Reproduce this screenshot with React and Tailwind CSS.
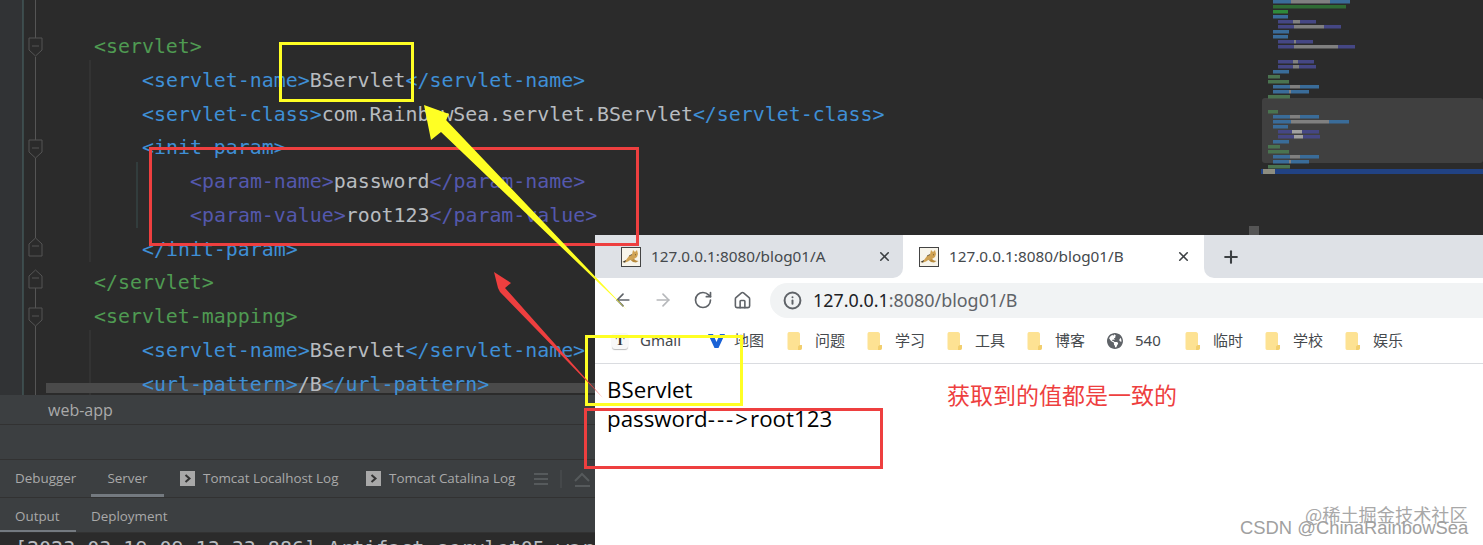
import React from 'react';
import { ArrowLeft, ArrowRight, RotateCw, House, Info, X, Plus } from 'lucide-react';
import { FaGlobeAmericas } from 'react-icons/fa';

const G = '#4f9a52';
const B = '#3f8fd6';
const P = '#5458ad';
const T = '#b8bcc0';

const codeLines = [
    { indent: 0, parts: [['<servlet>', G]] },
    { indent: 1, parts: [['<servlet-name>', B], ['BServlet', T], ['</servlet-name>', B]] },
    { indent: 1, parts: [['<servlet-class>', B], ['com.RainbowSea.servlet.BServlet', T], ['</servlet-class>', B]] },
    { indent: 1, parts: [['<init-param>', B]] },
    { indent: 2, parts: [['<param-name>', P], ['password', T], ['</param-name>', P]] },
    { indent: 2, parts: [['<param-value>', P], ['root123', T], ['</param-value>', P]] },
    { indent: 1, parts: [['</init-param>', B]] },
    { indent: 0, parts: [['</servlet>', G]] },
    { indent: 0, parts: [['<servlet-mapping>', G]] },
    { indent: 1, parts: [['<servlet-name>', B], ['BServlet', T], ['</servlet-name>', B]] },
    { indent: 1, parts: [['<url-pattern>', B], ['/B', T], ['</url-pattern>', B]] },
];

const bl = '#3a6c99';
const gr = '#4a7350';
const pu = '#454784';
const gy = '#808080';

// minimap rows: y, left, then [width, colour] runs
const miniRows = [
    [0, 1273, [18, bl], [39, gy], [20, bl]],
    [5, 1273, [73, '#2f6b34']],
    [10, 1273, [15, '#2f8a3a']],
    [15, 1273, [15, bl]],
    [20, 1278, [15, pu], [7, gy], [16, pu]],
    [25, 1278, [16, pu], [30, gy], [17, pu]],
    [30, 1273, [16, bl]],
    [35, 1273, [15, bl]],
    [40, 1278, [16, pu], [2, gy], [17, pu]],
    [45, 1278, [16, pu], [44, gy], [17, pu]],
    [60, 1278, [15, pu], [5, gy], [16, pu]],
    [65, 1278, [15, pu], [6, gy], [17, pu]],
    [70, 1273, [16, bl]],
    [75, 1268, [12, gr]],
    [80, 1268, [21, gr]],
    [85, 1273, [17, bl], [10, gy], [19, bl]],
    [90, 1273, [16, bl], [2, gy], [18, bl]],
    [95, 1268, [22, gr]],
    [110, 1268, [10, gr]],
    [115, 1273, [17, bl], [10, gy], [19, bl]],
    [120, 1273, [18, bl], [38, gy], [20, bl]],
    [125, 1273, [15, bl]],
    [130, 1278, [14, pu], [10, '#a0a0a0'], [17, pu]],
    [135, 1278, [16, pu], [9, '#a0a0a0'], [17, pu]],
    [140, 1273, [16, bl]],
    [145, 1268, [12, gr]],
    [150, 1268, [21, gr]],
    [155, 1273, [17, bl], [10, gy], [19, bl]],
    [160, 1273, [16, bl], [2, gy], [18, bl]],
    [165, 1268, [22, gr]],
];

const Minimap = () => (
    <svg className="absolute left-0 top-0 blur-[0.6px]" width="1483" height="235">
        <rect x="1262" y="98" width="221" height="65" rx="3" fill="#404040" />
        <rect x="1261" y="169" width="222" height="5" fill="#214283" />
        <rect x="1263" y="169" width="12" height="5" fill="#8d8d80" />
        {miniRows.map(([y, left, ...runs]) => {
            let x = left;
            return runs.map(([w, c]) => {
                const r = <rect key={`${y}-${x}`} x={x} y={y} width={w} height="3.5" fill={c} />;
                x += w;
                return r;
            });
        })}
        <rect x="1249" y="226" width="10" height="9" fill="#555555" />
    </svg>
);

const FoldMark = ({ y, up }) => (
    <g fill="#2b2b2b" stroke="#555555" strokeWidth="1">
        <path
            d={up
                ? `M29 ${y + 18}V${y + 6}L35.500 ${y}L42 ${y + 6}V${y + 18}Z`
                : `M29 ${y}H42V${y + 12}L35.500 ${y + 18}L29 ${y + 12}Z`}
        />
        <path d={`M32 ${y + 8}H39`} />
    </g>
);

const Gutter = () => (
    <svg className="absolute left-0 top-0" width="150" height="395">
        <rect width="23" height="395" fill="#313335" />
        <rect x="22.500" width="1" height="395" fill="#4d6b6b" />
        <path d="M35.500 0V38M35.500 57V140M35.500 158V238M35.500 288V308M35.500 326V395" stroke="#555555" />
        <path d="M90 60V262M90 330V395" stroke="#3d3d3d" />
        <path d="M137 162V228" stroke="#3a5050" />
        <FoldMark y={38} />
        <FoldMark y={140} />
        <FoldMark y={238} up />
        <FoldMark y={270} up />
        <FoldMark y={308} />
    </svg>
);

const CodeEditor = () => (
    <div className="relative h-[395px] w-[1483px] overflow-hidden bg-[#2b2b2b]">
        <Minimap />
        <Gutter />
        <div className="absolute left-[46px] top-[383px] h-[10px] w-[560px] bg-[#4a4a4a]" />
        <div className="relative pl-[94px] pt-[30px] font-['DejaVu_Sans_Mono',monospace] text-[19.9px] leading-[33.75px] whitespace-pre">
            {codeLines.map((line, i) => (
                <div key={i} style={{ paddingLeft: line.indent * 48 }}>
                    {line.parts.map(([text, color], j) => (
                        <span key={j} style={{ color }}>{text}</span>
                    ))}
                </div>
            ))}
        </div>
    </div>
);

const ToolTab = ({ label, icon, active, className }) => (
    <div className={`relative flex h-full items-center ${className}`}>
        {icon && (
            <span className="mr-2 flex h-[15px] w-[15px] items-center justify-center bg-[#a8a8a8]">
                <svg width="9" height="9" viewBox="0 0 9 9"><path d="M2.500 1L6.500 4.500L2.500 8" fill="none" stroke="#333" strokeWidth="2" /></svg>
            </span>
        )}
        <span>{label}</span>
        {active}
    </div>
);

const BottomPanel = () => (
    <div className="h-[150px] w-[1483px] overflow-hidden bg-[#3c3f41] font-['Open_Sans',sans-serif] text-[13.4px] text-[#a9a9a9]">
        <div className="flex h-[30px] items-center border-b border-[#323232] pl-[48px] text-[16px] text-[#aaaaaa]">web-app</div>
        <div className="h-[35px] border-b border-[#323232]" />
        <div className="flex h-[38px] items-center border-b border-[#323232] pl-[15px]">
            <ToolTab label="Debugger" className="w-[76px]" />
            <ToolTab
                label="Server"
                className="w-[73px] justify-center"
                active={<div className="absolute bottom-0 left-0 h-[3px] w-full bg-[#747a80]" />}
            />
            <ToolTab label="Tomcat Localhost Log" icon className="ml-[16px] w-[186px]" />
            <ToolTab label="Tomcat Catalina Log" icon className="w-[168px]" />
            <svg width="60" height="20" viewBox="0 0 60 20">
                <path d="M0 5H14M0 10H14M0 15H14" stroke="#565a5c" strokeWidth="2" />
                <path d="M27 1V19" stroke="#4e5254" />
                <path d="M41 12L48 5L55 12M41 17H56" fill="none" stroke="#565a5c" strokeWidth="2" />
            </svg>
        </div>
        <div className="flex h-[35px] items-center border-b border-[#323232] pl-[15px] pt-[2px]">
            <div className="relative flex h-full w-[76px] items-center">
                <span>Output</span>
                <div className="absolute bottom-0 -left-[15px] h-[2px] w-[76px] bg-[#747a80]" />
            </div>
            <span>Deployment</span>
        </div>
        <div className="h-[12px] overflow-hidden bg-[#2b2b2b] pl-[15px] pt-[3px] font-['DejaVu_Sans_Mono',monospace] text-[20px] leading-[24px] whitespace-pre text-[#b8bcc0]">
            [2023-03-19 09:13:33,886] Artifact servlet05:war
        </div>
    </div>
);

const TomcatIcon = () => (
    <svg className="shrink-0" width="20" height="20" viewBox="0 0 20 20">
        <rect x="0.500" y="0.500" width="19" height="19" fill="#f7f4ea" stroke="#444" />
        <path d="M1.500 15L5 13L8 9L11 7.500L12 3L14 5L16 3L17 7L16 10L13 12L10 12.500L7 14.500L4 15.500Z" fill="#d0a252" />
        <path d="M9 12.500L12 15L15 15.500L17.500 14L15 13.500L13 12Z" fill="#b88a3c" />
        <path d="M1.500 15L5 13L4 15.500Z" fill="#3a3a3a" />
        <path d="M8 9L11 7.500M14 7.500L15 8" stroke="#5a4a2a" strokeWidth="0.800" />
    </svg>
);

const Folder = () => (
    <svg className="shrink-0" width="16" height="20" viewBox="0 0 16 20">
        <path d="M2 1H11C12 1 13 2 13 3V14H15V17C15 18 14 19 13 19H2C1 19 0.500 18 0.500 17V3C0.500 2 1 1 2 1Z" fill="#fde293" />
        <path d="M13 14H15V17C15 18 14 19 13 19H11V16C11 15 12 14 13 14Z" fill="#f2cf6f" />
    </svg>
);

const folders = ['问题', '学习', '工具', '博客'];
const foldersAfter = ['临时', '学校', '娱乐'];

const Bookmark = ({ icon, label, className }) => (
    <div className={`flex h-full items-center ${className}`}>
        <span className="mr-[12px] flex w-[16px] justify-center">{icon}</span>
        <span>{label}</span>
    </div>
);

const BrowserWindow = () => (
    <div className="absolute left-[595px] top-[235px] h-[310px] w-[888px] bg-white">
        <div className="flex h-[43px] bg-white font-['Noto_Sans','Noto_Sans_CJK_SC',sans-serif] text-[15.3px] text-[#45494d]">
            <div className="flex w-[308px] items-center rounded-br-[10px] bg-[#dee1e6] pl-[26px]">
                <TomcatIcon />
                <span className="ml-[10px] w-[226px] whitespace-nowrap">127.0.0.1:8080/blog01/A</span>
                <X className="h-[15px] w-[15px] text-[#3c4043]" strokeWidth={2.5} />
            </div>
            <div className="flex w-[301px] items-center rounded-t-[10px] bg-white pl-[16px]">
                <TomcatIcon />
                <span className="ml-[10px] w-[227px] whitespace-nowrap">127.0.0.1:8080/blog01/B</span>
                <X className="h-[15px] w-[15px] text-[#3c4043]" strokeWidth={2.5} />
            </div>
            <div className="flex flex-1 items-center rounded-bl-[10px] bg-[#dee1e6] pl-[17px]">
                <Plus className="h-[20px] w-[20px] text-[#3c4043]" strokeWidth={2.5} />
            </div>
        </div>
        <div className="flex h-[40px] items-center pl-[18px] pt-[4px] text-[#5f6368]">
            <ArrowLeft className="h-[20px] w-[20px]" />
            <ArrowRight className="ml-[20px] h-[20px] w-[20px] text-[#b6b8bb]" />
            <RotateCw className="ml-[20px] h-[20px] w-[20px]" />
            <House className="ml-[20px] h-[19px] w-[19px]" />
            <div className="ml-[18px] flex h-[35px] flex-1 items-center self-end rounded-l-full bg-[#f1f3f4] pl-[13px]">
                <Info className="h-[19px] w-[19px] text-[#5f6368]" strokeWidth={2.5} />
                <span className="ml-[11px] font-['Noto_Sans',sans-serif] text-[17.9px] text-[#202124]">
                    127.0.0.1<span className="text-[#5f6368]">:8080/blog01/B</span>
                </span>
            </div>
        </div>
        <div className="flex h-[46px] items-center border-b border-[#dadce0] pl-[17px] font-['Noto_Sans','Noto_Sans_CJK_SC',sans-serif] text-[15px] text-[#45494d]">
            <Bookmark
                className="w-[96px]"
                label="Gmail"
                icon={<span className="flex h-[16px] w-[16px] items-center justify-center rounded-[3px] bg-[#f8f8f8] font-['Liberation_Serif',serif] text-[13px] font-bold text-[#333] shadow-[0_1px_1px_#bbb]">T</span>}
            />
            <div className="flex w-[79px] items-center">
                <svg width="17" height="16" viewBox="0 0 17 16"><path d="M0 1H5L8.500 9L12 1H17L10.500 15H6.500Z" fill="#1a62d6" /></svg>
                <span className="ml-[9px]">地图</span>
            </div>
            {folders.map((f) => <Bookmark key={f} className="w-[80px]" label={f} icon={<Folder />} />)}
            <Bookmark
                className="w-[78px]"
                label="540"
                icon={<FaGlobeAmericas className="h-[18px] w-[18px] text-[#5f6368]" />}
            />
            {foldersAfter.map((f) => <Bookmark key={f} className="w-[80px]" label={f} icon={<Folder />} />)}
        </div>
        <div className="pl-[12px] pt-[11px] font-['Open_Sans',sans-serif] text-[22.3px] leading-[29px] text-black">
            <div>BServlet</div>
            <div>password<span className="tracking-[2px]">---&gt;</span>root123</div>
        </div>
    </div>
);

// screenshot annotations drawn on top
const Annotations = () => (
    <>
        <div className="absolute left-[279px] top-[42px] h-[60px] w-[135px] border-[3px] border-[#ffff24]" />
        <div className="absolute left-[149px] top-[147px] h-[99px] w-[490px] border-[3px] border-[#ee3f3f]" />
        <div className="absolute left-[585px] top-[335px] h-[71px] w-[158px] border-[3px] border-[#ffff24]" />
        <div className="absolute left-[584px] top-[408px] h-[61px] w-[299px] border-[3px] border-[#ee3f3f]" />
        <svg className="absolute left-0 top-0" width="1483" height="545">
            <path d="M424 105L449 114L446 120L627 310L441 132L431 140Z" fill="#ffff24" />
            <path d="M494 272L511 283L505 288L603 398L500 292L498 288Z" fill="#ee3f3f" />
        </svg>
        <div className="absolute left-[947px] top-[379px] font-['Noto_Sans_CJK_SC',sans-serif] text-[23px] leading-[31px] whitespace-nowrap text-[#ee3f3f]">获取到的值都是一致的</div>
        <div className="absolute left-[1305px] top-[504px] font-['Noto_Sans_CJK_SC',sans-serif] text-[18.2px] leading-[20px] whitespace-nowrap text-[#a8a8a8]">@稀土掘金技术社区</div>
        <div className="absolute left-[1240px] top-[518px] font-['Liberation_Sans',sans-serif] text-[18.4px] leading-[20px] whitespace-nowrap text-[#a0a0a0]">CSDN @ChinaRainbowSea</div>
    </>
);

const App = () => (
    <div className="relative h-[545px] w-[1483px] overflow-hidden bg-[#2b2b2b]">
        <CodeEditor />
        <BottomPanel />
        <BrowserWindow />
        <Annotations />
    </div>
);

export default App;
